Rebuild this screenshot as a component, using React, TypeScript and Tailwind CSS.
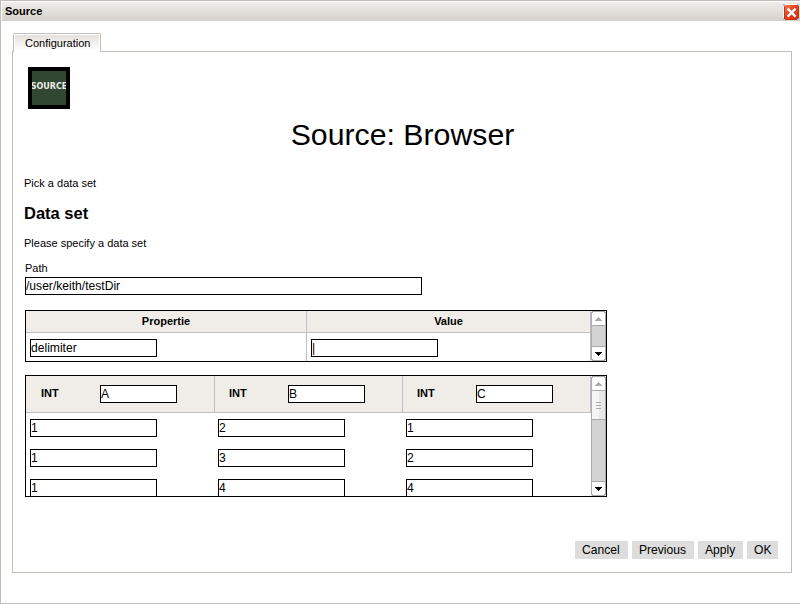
import React from "react";

function Field({ value, className = "w-[127px]" }: { value: string; className?: string }) {
  return (
    <div className={`h-[18px] shrink-0 whitespace-pre border border-black bg-white text-[12.1px] leading-4 ${className}`}>
      {value}
    </div>
  );
}

function ArrowButton({ down = false }: { down?: boolean }) {
  return (
    <svg width="15" height="15" className="block shrink-0" shapeRendering="crispEdges">
      <rect width="15" height="15" fill="#fff" />
      {down ? (
        <>
          <path d="M0 0H15V1H1V13H2V14H13V13H14V1H15V14H14V15H1V14H0Z" fill="#aaa" />
          <path d="M4 6H11V7H10V8H9V9H8V10H7V9H6V8H5V7H4Z" fill="#000" />
        </>
      ) : (
        <>
          <path d="M0 15V1H1V0H14V1H15V15V14H14V2H13V1H2V2H1V14H15V15Z" fill="#aaa" />
          <path d="M4 10V9H5V8H6V7H7V6H8V7H9V8H10V9H11V10Z" fill="#aaa" />
        </>
      )}
    </svg>
  );
}

function Scrollbar({ thumb = false }: { thumb?: boolean }) {
  return (
    <div className="flex w-[15px] shrink-0 flex-col">
      <ArrowButton />
      <div className="min-h-0 flex-1 border-x border-[#aaa] bg-[#d3d3d3]">
        {thumb && (
          <div className="flex h-[29px] flex-col items-center justify-center gap-[2px] border-b border-[#aaa] bg-linear-to-r from-[#f5f5f5] from-50% to-[#e8e8e8] to-50%">
            <div className="h-px w-[5px] bg-[#aaa]" />
            <div className="h-px w-[5px] bg-[#aaa]" />
            <div className="h-px w-[5px] bg-[#aaa]" />
          </div>
        )}
      </div>
      <ArrowButton down />
    </div>
  );
}

function CloseIcon() {
  return (
    <svg width="16" height="16" viewBox="0 0 16 16" className="block">
      <defs>
        <linearGradient id="close" x1="0" y1="0" x2="1" y2="1">
          <stop offset="0" stopColor="#ee8065" />
          <stop offset=".45" stopColor="#e5401e" />
          <stop offset="1" stopColor="#d92c08" />
        </linearGradient>
      </defs>
      <rect width="16" height="16" fill="#fff" />
      <rect x="1" y="1" width="15" height="15" rx="1" fill="url(#close)" />
      <path d="M1.5 2.5V14.5M2.5 15.5H14.5M15.5 2.5V14.5" stroke="#c9320f" />
      <path d="M0 0h2v1H1v1H0ZM14 0h2v2h-1V1h-1ZM0 14h1v1h1v1H0ZM15 14h1v2h-2v-1h1Z" fill="#9fc3ee" />
      <path d="M4.6 4.6L12.6 12.6M12.6 4.6L4.6 12.6" stroke="#fff" strokeWidth="2.3" />
    </svg>
  );
}

const columns = [
  { name: "A", cell: "w-[189px] pl-[15px]" },
  { name: "B", cell: "w-[188px] pl-[14px]" },
  { name: "C", cell: "w-[188px] pl-[14px]" },
];
const rows = [
  ["1", "2", "1"],
  ["1", "3", "2"],
  ["1", "4", "4"],
];

export default function App() {
  return (
    <div className="flex h-[604px] w-[800px] flex-col overflow-hidden border-y border-l border-[#c0bcb8] bg-white pl-px pt-px font-['Liberation_Sans',Arial,sans-serif] text-[11px] leading-[13px] text-black">
      <header className="flex h-[19px] shrink-0 justify-between bg-linear-to-b from-[#efece9] to-[#d6d1cb]">
        <span className="pl-[3px] pt-[3px] font-bold">Source</span>
        <div className="mr-px mt-[2px]"><CloseIcon /></div>
      </header>

      <div className="ml-[11px] mt-3 flex h-[18px] shrink-0">
        <div className="z-10 h-[19px] w-[88px] rounded-t-[2px] border border-b-0 border-[#c0bcb8] bg-white px-px pt-px">
          <div className="h-[17px] bg-linear-to-b from-[#e4dfda] to-white to-90% pl-[10px] pt-[2px]">Configuration</div>
        </div>
      </div>

      <main className="ml-[10px] flex h-[522px] w-[780px] shrink-0 flex-col border border-[#c0c0b8] pl-[11px]">
        <div className="ml-1 mt-[15px] flex size-[42px] shrink-0 items-center justify-center overflow-hidden border-4 border-black bg-[#314731] pb-[2px]">
          <span className="whitespace-nowrap font-['DejaVu_Sans',sans-serif] text-[8px] font-bold leading-none text-[#e8ebe8]">SOURCE</span>
        </div>
        <h1 className="mt-2 w-[757px] text-center text-[30.25px] leading-9">Source: Browser</h1>
        <p className="mt-6">Pick a data set</p>
        <h2 className="mb-px mt-[13px] text-[16.5px] font-bold leading-5">Data set</h2>
        <p className="mt-[13px]">Please specify a data set</p>
        <label className="ml-px mt-3">Path</label>
        <Field value="/user/keith/testDir" className="ml-px mt-[2px] w-[397px]" />

        <section className="ml-px mt-[15px] flex h-[52px] w-[582px] shrink-0 border border-black">
          <div className="w-[565px]">
            <div className="flex h-[22px] border-b border-[#c0bfc8] bg-[#f0ede8] text-center font-bold leading-5">
              <div className="w-[281px] border-r border-[#c0bfc8]">Propertie</div>
              <div className="flex-1 border-r border-[#c0bfc8]">Value</div>
            </div>
            <div className="flex h-[28px]">
              <div className="w-[281px] border-r border-[#c0bfc8] pl-1 pt-[6px]"><Field value="delimiter" /></div>
              <div className="flex-1 border-r border-[#c0bfc8] pl-1 pt-[6px]"><Field value="|" /></div>
            </div>
          </div>
          <Scrollbar />
        </section>

        <section className="ml-px mt-[13px] flex h-[122px] w-[582px] shrink-0 overflow-hidden border border-black">
          <div className="h-[120px] w-[565px] overflow-hidden">
            <div className="flex h-[37px] border-b border-[#c0bfc8] bg-[#f0ede8]">
              {columns.map(({ name, cell }) => (
                <div key={name} className={`flex border-r border-[#c0bfc8] pt-[9px] ${cell}`}>
                  <span className="w-[59px] pt-[2px] font-bold">INT</span>
                  <Field value={name} className="w-[77px]" />
                </div>
              ))}
            </div>
            {rows.map((row, i) => (
              <div key={i} className="flex h-[30px] pt-[6px]">
                {row.map((value, j) => (
                  <div key={j} className="w-[188px] pl-1"><Field value={value} /></div>
                ))}
              </div>
            ))}
          </div>
          <Scrollbar thumb />
        </section>

        <footer className="mr-[13px] mt-11 flex justify-end gap-1 text-[12.1px] leading-[18px]">
          <button className="h-[18px] w-[53px] bg-[#ddd] pl-[7px] text-left">Cancel</button>
          <button className="h-[18px] w-[62px] bg-[#ddd] pl-[7px] text-left">Previous</button>
          <button className="h-[18px] w-[45px] bg-[#ddd] pl-[7px] text-left">Apply</button>
          <button className="h-[18px] w-[31px] bg-[#ddd] pl-[7px] text-left">OK</button>
        </footer>
      </main>
    </div>
  );
}
